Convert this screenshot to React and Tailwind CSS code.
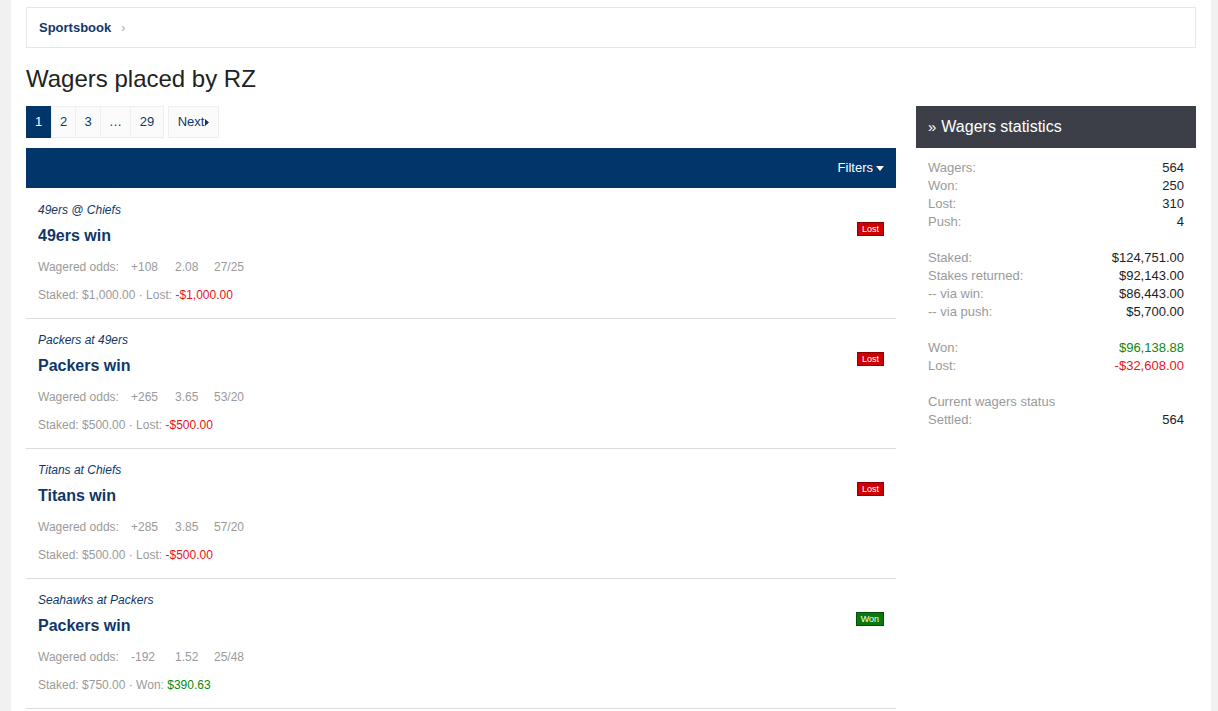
import React from 'react';

const wagers = [
  { game: '49ers @ Chiefs', pick: '49ers win', odds: ['+108', '2.08', '27/25'], staked: '$1,000.00', result: 'Lost', amount: '-$1,000.00' },
  { game: 'Packers at 49ers', pick: 'Packers win', odds: ['+265', '3.65', '53/20'], staked: '$500.00', result: 'Lost', amount: '-$500.00' },
  { game: 'Titans at Chiefs', pick: 'Titans win', odds: ['+285', '3.85', '57/20'], staked: '$500.00', result: 'Lost', amount: '-$500.00' },
  { game: 'Seahawks at Packers', pick: 'Packers win', odds: ['-192', '1.52', '25/48'], staked: '$750.00', result: 'Won', amount: '$390.63' },
];

const stats = [
  ['Wagers:', '564'],
  ['Won:', '250'],
  ['Lost:', '310'],
  ['Push:', '4'],
  null,
  ['Staked:', '$124,751.00'],
  ['Stakes returned:', '$92,143.00'],
  ['-- via win:', '$86,443.00'],
  ['-- via push:', '$5,700.00'],
  null,
  ['Won:', '$96,138.88', 'text-[#0a8a0a]'],
  ['Lost:', '-$32,608.00', 'text-[#e8141c]'],
  null,
  ['Current wagers status', ''],
  ['Settled:', '564'],
];

function WagerRow({ w }) {
  const won = w.result === 'Won';
  return (
    <div className="flex justify-between border-b border-[#dcdcdc] px-3 pt-[14px] pb-[16px]">
      <div>
        <div className="text-[12px] leading-[14px] italic text-[#0f3769]">{w.game}</div>
        <div className="mt-[9px] text-base leading-5 font-bold text-[#0f3769]">{w.pick}</div>
        <div className="mt-[14px] flex text-[12px] leading-[14px] text-[#9a9a9a]">
          <span className="w-[93px]">Wagered odds:</span>
          <span className="w-[44px]">{w.odds[0]}</span>
          <span className="w-[39px]">{w.odds[1]}</span>
          <span>{w.odds[2]}</span>
        </div>
        <div className="mt-[14px] text-[12px] leading-[14px] text-[#9a9a9a]">
          Staked: {w.staked} · {w.result}:{' '}
          <span className={won ? 'text-[#0a8a0a]' : 'text-[#e8141c]'}>{w.amount}</span>
        </div>
      </div>
      <div className="pt-[19px]">
        <div
          className={
            'h-[14px] px-[4px] text-[9px] leading-[12px] text-white border ' +
            (won ? 'bg-[#0a7a0a] border-[#055005]' : 'bg-[#cc0000] border-[#900000]')
          }
        >
          {w.result}
        </div>
      </div>
    </div>
  );
}

export default function App() {
  return (
    <div className="min-h-screen bg-[#f1f1f1] font-['Liberation_Sans',Arial,sans-serif]">
      <div className="ml-[11px] mr-[7px] min-h-screen bg-white px-[15px] pt-[7px]">
        <div className="flex h-[41px] items-center border border-[#e6e6e6] px-3">
          <span className="text-[13px] font-bold text-[#0f3769]">Sportsbook</span>
          <span className="ml-[10px] text-[12px] text-[#aaa]">›</span>
        </div>

        <h1 className="mt-[16px] text-[24px] leading-[30px] text-[#222]">Wagers placed by RZ</h1>

        <div className="mt-[12px] flex gap-5">
          <div className="w-[870px]">
            <div className="flex h-[32px] text-[13px] text-[#0f3769]">
              <div className="flex">
                <span className="flex w-[25px] items-center justify-center bg-[#02366a] text-white">1</span>
                <span className="flex w-[25px] items-center justify-center border border-[#eee] bg-[#fbfbfb]">2</span>
                <span className="flex w-[25px] items-center justify-center border border-l-0 border-[#eee] bg-[#fbfbfb]">3</span>
                <span className="flex w-[30px] items-center justify-center border border-l-0 border-[#eee] bg-[#fbfbfb]">…</span>
                <span className="flex w-[33px] items-center justify-center border border-l-0 border-[#eee] bg-[#fbfbfb]">29</span>
              </div>
              <span className="ml-[4px] flex w-[51px] items-center justify-center border border-[#eee] bg-[#fbfbfb]">
                Next
                <svg width="4" height="7" viewBox="0 0 4 7" className="ml-[1px]"><path d="M0 0L4 3.5L0 7Z" fill="#0f3769" /></svg>
              </span>
            </div>

            <div className="mt-[10px] flex h-[40px] items-center justify-end bg-[#02366a] px-3 text-[13px] text-white">
              Filters
              <svg width="8" height="5" viewBox="0 0 8 5" className="ml-[3px]"><path d="M0 0H8L4 5Z" fill="#fff" /></svg>
            </div>

            <div className="mt-[1px]">
              {wagers.map((w, i) => (
                <WagerRow key={i} w={w} />
              ))}
            </div>
          </div>

          <div className="w-[280px]">
            <div className="flex h-[42px] items-center bg-[#3c3f48] px-3 text-base text-white">
              <span className="mr-[5px] text-[15px]">»</span>
              Wagers statistics
            </div>
            <div className="px-3 pt-[11px] text-[13px] leading-[18px]">
              {stats.map((s, i) =>
                s ? (
                  <div key={i} className="flex justify-between">
                    <span className="text-[#9a9a9a]">{s[0]}</span>
                    <span className={s[2] || 'text-[#222]'}>{s[1]}</span>
                  </div>
                ) : (
                  <div key={i} className="h-[18px]" />
                )
              )}
            </div>
          </div>
        </div>
      </div>
    </div>
  );
}
